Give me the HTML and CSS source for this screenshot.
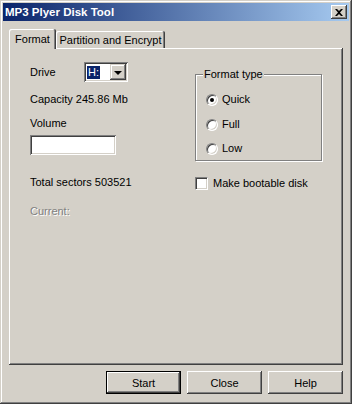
FILE: index.html
```html
<!DOCTYPE html>
<html lang="en">
<head>
    <meta charset="UTF-8">
    <title>MP3 Plyer Disk Tool</title>
    <link rel="stylesheet" href="styles.css">
</head>
<body>
    <div class="window">
        <div class="titlebar">
            <span class="title">MP3 Plyer Disk Tool</span>
            <div class="close-btn">
                <svg width="8" height="7" viewBox="0 0 8 7">
                    <path d="M0 0h2l2 2 2-2h2L5 3.5 8 7H6L4 5 2 7H0l3-3.5z" fill="#000"/>
                </svg>
            </div>
        </div>

        <div class="body">
            <div class="tabs">
                <div class="tab tab-active">Format</div>
                <div class="tab tab-other">Partition and Encrypt</div>
            </div>

            <div class="panel">
                <div class="left-col">
                    <div class="drive-row">
                        <span class="drive-label">Drive</span>
                        <div class="combo">
                            <span class="combo-value">H:</span>
                            <span class="combo-arrow"><span class="tri"></span></span>
                        </div>
                    </div>
                    <div class="line capacity">Capacity 245.86 Mb</div>
                    <div class="line volume">Volume</div>
                    <div class="textbox"></div>
                    <div class="line sectors">Total sectors 503521</div>
                    <div class="line current">Current:</div>
                </div>

                <div class="right-col">
                    <fieldset class="group">
                        <legend>Format type</legend>
                        <div class="radio-row first">
                            <span class="radio checked"></span>
                            <span>Quick</span>
                        </div>
                        <div class="radio-row second">
                            <span class="radio"></span>
                            <span>Full</span>
                        </div>
                        <div class="radio-row third">
                            <span class="radio"></span>
                            <span>Low</span>
                        </div>
                    </fieldset>
                    <div class="check-row">
                        <span class="checkbox"></span>
                        <span>Make bootable disk</span>
                    </div>
                </div>
            </div>

            <div class="buttons">
                <button class="btn btn-default">Start</button>
                <button class="btn">Close</button>
                <button class="btn">Help</button>
            </div>
        </div>
    </div>
</body>
</html>
```

FILE: styles.css
```css
body {
    margin: 0;
    font-family: "Liberation Sans", Arial, sans-serif;
    font-size: 11px;
    line-height: 13px;
    color: #000;
    background-color: #d4d0c8;
}
.window {
    width: 352px;
    height: 404px;
    box-sizing: border-box;
    padding: 3px;
    background-color: #d4d0c8;
    box-shadow: inset -1px -1px #404040, inset 1px 1px #d4d0c8,
                inset -2px -2px #808080, inset 2px 2px #fff;
}
.titlebar {
    height: 18px;
    display: flex;
    align-items: center;
    justify-content: space-between;
    padding-left: 2px;
    color: #fff;
    font-weight: bold;
    font-size: 11.5px;
    background: linear-gradient(to right, #0a246a, #a6caf0);
}
.close-btn {
    width: 16px;
    height: 14px;
    margin-right: 2px;
    box-sizing: border-box;
    display: flex;
    align-items: center;
    justify-content: center;
    background-color: #d4d0c8;
    box-shadow: inset -1px -1px #404040, inset 1px 1px #fff,
                inset -2px -2px #808080;
}
.close-btn svg {
    display: block;
}
.body {
    padding: 8px 6px 0 6px;
}
.tabs {
    display: flex;
    align-items: flex-end;
    height: 19px;
}
.tab {
    box-sizing: border-box;
    display: flex;
    align-items: center;
    justify-content: center;
    background-color: #d4d0c8;
    border-radius: 2px 2px 0 0;
    box-shadow: inset -1px 0 #404040, inset 1px 1px #fff, inset -2px 0 #808080;
}
.tab-active {
    width: 47px;
    height: 20px;
    margin-bottom: -1px;
    position: relative;
    z-index: 1;
}
.tab-other {
    width: 109px;
    height: 17px;
    padding-top: 2px;
}
.panel {
    height: 317px;
    box-sizing: border-box;
    padding: 14px 0 0 21px;
    display: flex;
    box-shadow: inset -1px -1px #404040, inset 1px 1px #fff,
                inset -2px -2px #808080;
}
.left-col {
    width: 165px;
}
.right-col {
    width: 127px;
}
.drive-row {
    display: flex;
    align-items: center;
    height: 20px;
}
.drive-label {
    width: 54px;
    padding-top: 1px;
}
.combo,
.textbox {
    box-sizing: border-box;
    background-color: #fff;
    box-shadow: inset 1px 1px #808080, inset -1px -1px #fff,
                inset 2px 2px #404040, inset -2px -2px #d4d0c8;
}
.combo {
    width: 44px;
    height: 20px;
    padding: 2px;
    display: flex;
    align-items: center;
    justify-content: space-between;
}
.combo-value {
    margin-left: 1px;
    padding: 0 1px;
    background-color: #0a246a;
    color: #fff;
}
.combo-arrow {
    width: 16px;
    height: 16px;
    box-sizing: border-box;
    display: flex;
    align-items: center;
    justify-content: center;
    background-color: #d4d0c8;
    box-shadow: inset -1px -1px #404040, inset 1px 1px #d4d0c8,
                inset -2px -2px #808080, inset 2px 2px #fff;
}
.tri {
    width: 0;
    height: 0;
    border-left: 4px solid transparent;
    border-right: 4px solid transparent;
    border-top: 4px solid #000;
    margin-top: 1px;
}
.capacity {
    margin-top: 11px;
}
.volume {
    margin-top: 11px;
}
.textbox {
    width: 86px;
    height: 20px;
    margin-top: 5px;
}
.sectors {
    margin-top: 21px;
}
.current {
    margin-top: 16px;
    color: #808080;
    text-shadow: 1px 1px #fff;
}
.group {
    margin: 6px 0 0 0;
    width: 127px;
    box-sizing: border-box;
    padding: 0 0 3px 10px;
    border: 1px solid #808080;
    box-shadow: inset 1px 1px #fff, 1px 1px #fff;
}
.group legend {
    margin-left: -3px;
    padding: 0 1px;
    background-color: #d4d0c8;
}
.radio-row {
    display: flex;
    align-items: center;
    gap: 4px;
    height: 17px;
}
.radio-row.first {
    margin-top: 10px;
}
.radio-row.second {
    margin-top: 8px;
}
.radio-row.third {
    margin-top: 7px;
}
.radio {
    width: 12px;
    height: 12px;
    box-sizing: border-box;
    border-radius: 50%;
    background-color: #fff;
    border: 1px solid;
    border-color: #808080 #fff #fff #808080;
    box-shadow: inset 1px 1px #404040, inset -1px -1px #d4d0c8;
    position: relative;
}
.radio.checked::after {
    content: "";
    position: absolute;
    left: 3px;
    top: 3px;
    width: 4px;
    height: 4px;
    border-radius: 50%;
    background-color: #000;
}
.check-row {
    display: flex;
    align-items: center;
    gap: 5px;
    margin-top: 16px;
}
.checkbox {
    width: 13px;
    height: 13px;
    box-sizing: border-box;
    background-color: #fff;
    border: 1px solid;
    border-color: #808080 #fff #fff #808080;
    box-shadow: inset 1px 1px #404040, inset -1px -1px #d4d0c8;
}
.buttons {
    display: flex;
    justify-content: flex-end;
    gap: 6px;
    margin-top: 6px;
}
.btn {
    width: 75px;
    height: 23px;
    padding: 0;
    border: none;
    font-family: inherit;
    font-size: 11px;
    color: #000;
    background-color: #d4d0c8;
    box-shadow: inset -1px -1px #404040, inset 1px 1px #fff,
                inset -2px -2px #808080;
}
.btn-default {
    box-shadow: inset 0 0 0 1px #000, inset -2px -2px #404040,
                inset 2px 2px #fff, inset -3px -3px #808080;
}
```
